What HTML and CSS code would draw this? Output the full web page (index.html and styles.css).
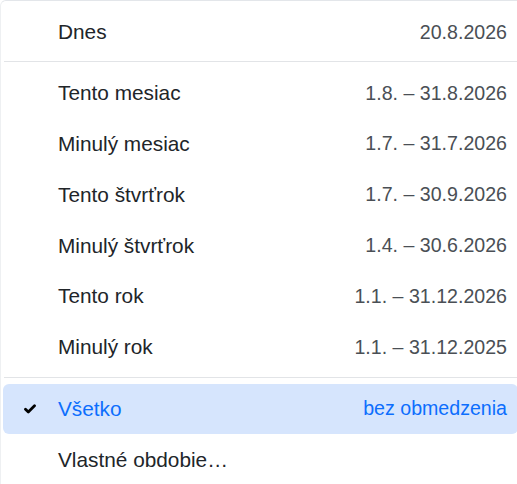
FILE: index.html
```html
<!DOCTYPE html>
<html lang="sk">
<head>
<meta charset="utf-8">
<title>Obdobie</title>
<link rel="stylesheet" href="styles.css">
</head>
<body>
<div class="menu">
  <div class="item first"><span class="check"></span><span class="label">Dnes</span><span class="range">20.8.2026</span></div>
  <div class="divider"></div>
  <div class="item"><span class="check"></span><span class="label">Tento mesiac</span><span class="range">1.8. – 31.8.2026</span></div>
  <div class="item"><span class="check"></span><span class="label">Minulý mesiac</span><span class="range">1.7. – 31.7.2026</span></div>
  <div class="item"><span class="check"></span><span class="label">Tento štvrťrok</span><span class="range">1.7. – 30.9.2026</span></div>
  <div class="item"><span class="check"></span><span class="label">Minulý štvrťrok</span><span class="range">1.4. – 30.6.2026</span></div>
  <div class="item"><span class="check"></span><span class="label">Tento rok</span><span class="range">1.1. – 31.12.2026</span></div>
  <div class="item"><span class="check"></span><span class="label">Minulý rok</span><span class="range">1.1. – 31.12.2025</span></div>
  <div class="divider second"></div>
  <div class="item active"><span class="check"><svg width="12" height="10" viewBox="0 0 12 10"><path d="M1.5 5.2 L4.3 8 L10.5 1.8" fill="none" stroke="#000" stroke-width="2.8" stroke-linecap="round" stroke-linejoin="round"/></svg></span><span class="label">Všetko</span><span class="range">bez obmedzenia</span></div>
  <div class="item"><span class="check"></span><span class="label">Vlastné obdobie…</span></div>
</div>
</body>
</html>
```

FILE: styles.css
```css
html, body {
  margin: 0;
  padding: 0;
  background: #fff;
  overflow: hidden;
}

body {
  font-family: "Liberation Sans", Arial, sans-serif;
  color: #212529;
}

.menu {
  width: 515px;
  border-top: 1px solid #e3e6ea;
  border-left: 1px solid #eef0f2;
  border-top-left-radius: 6px;
  padding: 6px 2px 0 2px;
  background: #fff;
}

.item {
  display: flex;
  align-items: center;
  height: 50.8px;
  padding: 0 11px 0 0;
  border-radius: 6px;
}

.check {
  width: 55px;
  flex: none;
  display: flex;
  align-items: center;
  padding-left: 21px;
  box-sizing: border-box;
}

.check svg {
  display: block;
}

.label {
  flex: 1;
  font-size: 20.8px;
  color: #212529;
}

.range {
  font-size: 19.6px;
  color: #4a4f55;
}

.divider {
  height: 1px;
  background: #e2e4e7;
  margin: 3px 0 6px 1px;
}

.divider.second {
  margin: 4px 0 6px 1px;
}

.active {
  background: #d6e5fd;
}

.active .label,
.active .range {
  color: #0d6efd;
}
```
